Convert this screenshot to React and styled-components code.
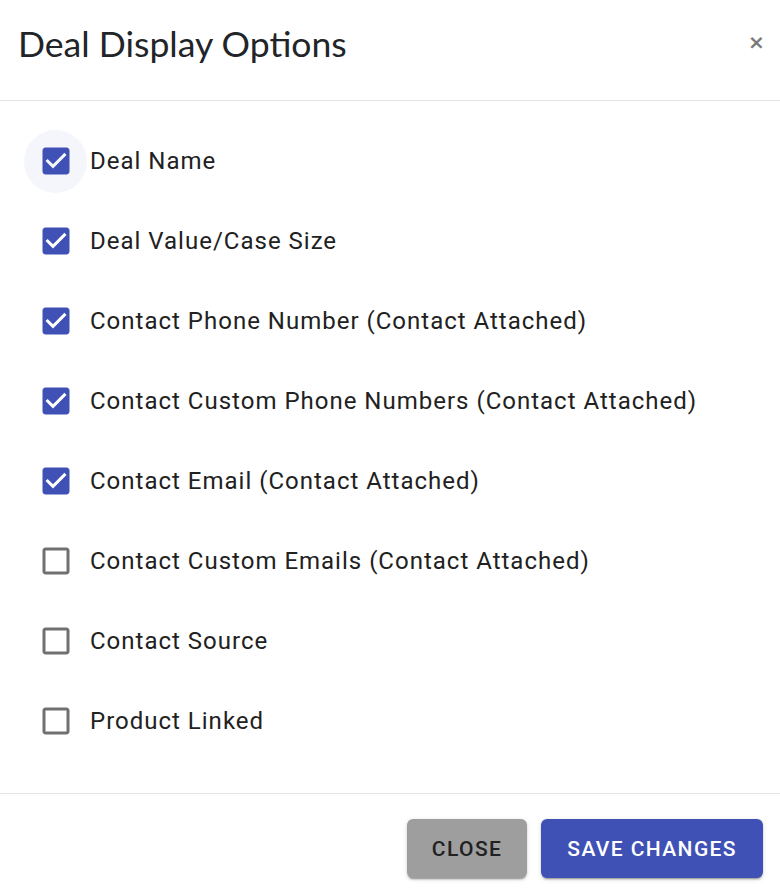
import React, { useState } from 'react';
import styled, { createGlobalStyle } from 'styled-components';

const GlobalStyle = createGlobalStyle`
  html, body {
    margin: 0;
    padding: 0;
    background: #ffffff;
  }
  * {
    box-sizing: border-box;
  }
`;

const Dialog = styled.div`
  width: 780px;
  height: 892px;
  display: flex;
  flex-direction: column;
  background: #fff;
  font-family: Roboto, 'Liberation Sans', sans-serif;
  overflow: hidden;
`;

const Header = styled.div`
  height: 102px;
  display: flex;
  align-items: flex-start;
  justify-content: space-between;
  padding: 22px 16px 0 18px;
  border-bottom: 1.5px solid #e4e4e4;
`;

const Title = styled.h5`
  margin: 0;
  font-family: Lato, 'Open Sans', sans-serif;
  font-weight: 400;
  font-size: 35.6px;
  line-height: 44px;
  color: #212529;
`;

const CloseX = styled.button`
  border: none;
  background: none;
  padding: 0;
  margin-top: 10px;
  width: 16px;
  height: 20px;
  font-family: 'DejaVu Sans', sans-serif;
  font-size: 20px;
  font-weight: 700;
  line-height: 20px;
  color: #7a7a7a;
  cursor: pointer;
`;

const Body = styled.div`
  flex: 1;
  display: flex;
  flex-direction: column;
  padding: 20px 0 32px 24px;
`;

const Row = styled.label`
  height: 80px;
  display: flex;
  align-items: center;
  cursor: pointer;
`;

const BoxWrap = styled.span`
  width: 63px;
  height: 63px;
  margin-right: 3px;
  display: flex;
  align-items: center;
  justify-content: center;
  border-radius: 50%;
  background: ${(p) => (p.$focused ? 'rgba(63, 81, 181, 0.05)' : 'transparent')};
`;

const Label = styled.span`
  font-size: 24px;
  line-height: 36px;
  letter-spacing: 1px;
  color: #212121;
`;

const Footer = styled.div`
  height: 99px;
  display: flex;
  justify-content: flex-end;
  align-items: flex-start;
  gap: 14px;
  padding: 25px 17px 0 0;
  border-top: 1.5px solid #e4e4e4;
`;

const Button = styled.button`
  height: 59px;
  padding: 0 ${(p) => (p.$primary ? '26px' : '25px')};
  border: none;
  border-radius: 6px;
  font-family: Roboto, sans-serif;
  font-weight: 500;
  font-size: 21px;
  letter-spacing: 1.4px;
  text-transform: uppercase;
  color: ${(p) => (p.$primary ? '#ffffff' : '#212121')};
  background: ${(p) => (p.$primary ? '#3f51b5' : '#9e9e9e')};
  box-shadow: 0px 3px 1px -2px rgba(0, 0, 0, 0.2), 0px 2px 2px 0px rgba(0, 0, 0, 0.14),
    0px 1px 5px 0px rgba(0, 0, 0, 0.12);
  cursor: pointer;
`;

function CheckIcon({ checked }) {
  if (checked) {
    return (
      <svg width="36" height="36" viewBox="0 0 24 24">
        <path
          fill="#3f51b5"
          d="M19 3H5c-1.11 0-2 .9-2 2v14c0 1.1.89 2 2 2h14c1.11 0 2-.9 2-2V5c0-1.1-.89-2-2-2zm-9 14l-5-5 1.41-1.41L10 14.17l7.59-7.59L19 8l-9 9z"
        />
      </svg>
    );
  }
  return (
    <svg width="36" height="36" viewBox="0 0 24 24">
      <path
        fill="#707070"
        d="M19 5v14H5V5h14m0-2H5c-1.1 0-2 .9-2 2v14c0 1.1.9 2 2 2h14c1.1 0 2-.9 2-2V5c0-1.1-.9-2-2-2z"
      />
    </svg>
  );
}

const initial = [
  { label: 'Deal Name', checked: true },
  { label: 'Deal Value/Case Size', checked: true },
  { label: 'Contact Phone Number (Contact Attached)', checked: true },
  { label: 'Contact Custom Phone Numbers (Contact Attached)', checked: true },
  { label: 'Contact Email (Contact Attached)', checked: true },
  { label: 'Contact Custom Emails (Contact Attached)', checked: false },
  { label: 'Contact Source', checked: false },
  { label: 'Product Linked', checked: false },
];

export default function App() {
  const [options, setOptions] = useState(initial);

  const toggle = (i) =>
    setOptions((prev) => prev.map((o, j) => (j === i ? { ...o, checked: !o.checked } : o)));

  return (
    <>
      <GlobalStyle />
      <Dialog>
        <Header>
          <Title>Deal Display Options</Title>
          <CloseX aria-label="close">×</CloseX>
        </Header>
        <Body>
          {options.map((o, i) => (
            <Row key={o.label} onClick={() => toggle(i)}>
              <BoxWrap $focused={i === 0}>
                <CheckIcon checked={o.checked} />
              </BoxWrap>
              <Label>{o.label}</Label>
            </Row>
          ))}
        </Body>
        <Footer>
          <Button>Close</Button>
          <Button $primary>Save Changes</Button>
        </Footer>
      </Dialog>
    </>
  );
}
